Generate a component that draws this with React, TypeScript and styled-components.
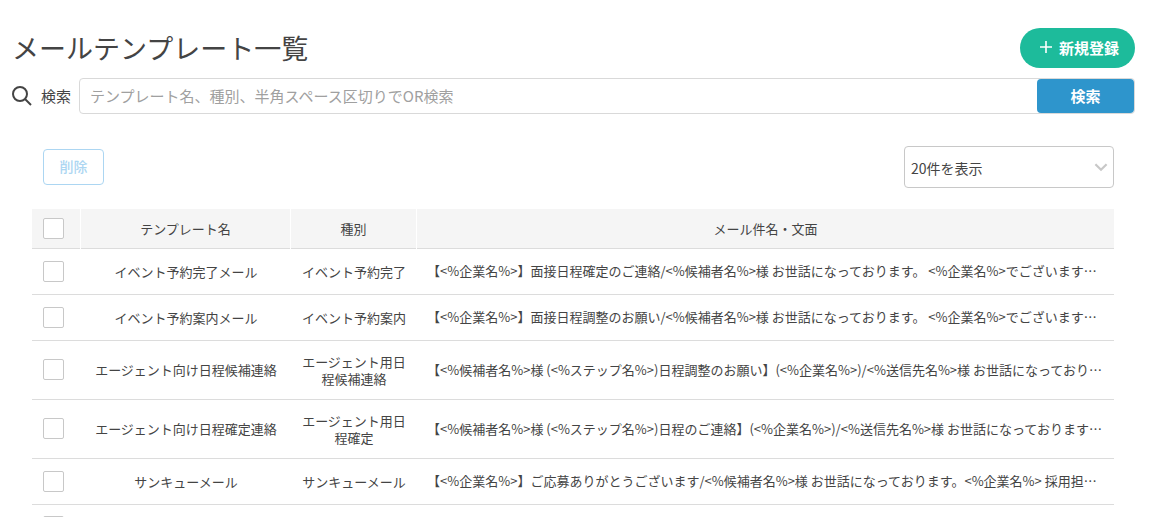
import React from 'react';
import styled, { createGlobalStyle } from 'styled-components';

const GlobalStyle = createGlobalStyle`
  * { box-sizing: border-box; }
  body {
    margin: 0;
    background: #fff;
    color: #444;
    font-family: "Noto Sans CJK JP", "Noto Sans", sans-serif;
    font-size: 13px;
  }
  button, input, select { font-family: inherit; color: inherit; }
`;

const Page = styled.main`
  padding: 28px 18px 0 12px;
`;

const Header = styled.header`
  display: flex;
  align-items: center;
  justify-content: space-between;
`;

const Title = styled.h1`
  margin: 0;
  font-size: 27px;
  line-height: 40px;
  font-weight: 400;
`;

const CreateButton = styled.button`
  display: flex;
  align-items: center;
  gap: 7px;
  height: 40px;
  padding: 0 16px 2px 20px;
  border: 0;
  border-radius: 20px;
  background: #1dbb9b;
  color: #fff;
  font-size: 15px;
  font-weight: 700;
`;

const SearchForm = styled.form`
  display: flex;
  align-items: center;
  gap: 8px;
  margin-top: 10px;
`;

const SearchLabel = styled.label`
  display: flex;
  align-items: center;
  gap: 9px;
  font-size: 15px;
  line-height: 20px;
`;

const SearchBox = styled.div`
  display: flex;
  flex: 1;
  height: 36px;
  border: 1px solid #d9d9d9;
  border-radius: 4px;
`;

const SearchInput = styled.input`
  flex: 1;
  min-width: 0;
  padding: 0 10px 2px;
  border: 0;
  border-radius: 4px;
  outline: 0;
  background: transparent;
  font-size: 15px;
  &::placeholder { color: #a0a0a0; opacity: 1; }
`;

const SearchButton = styled.button`
  width: 97px;
  padding: 0 0 2px;
  border: 0;
  border-radius: 4px;
  background: #2e95cc;
  color: #fff;
  font-size: 15px;
  font-weight: 700;
`;

const Content = styled.section`
  padding: 32px 21px 0 20px;
`;

const Toolbar = styled.div`
  display: flex;
  align-items: center;
  justify-content: space-between;
  padding-left: 11px;
  margin-bottom: 21px;
`;

const DeleteButton = styled.button`
  width: 61px;
  height: 36px;
  padding: 0 0 2px;
  border: 1px solid #acd6f2;
  border-radius: 4px;
  background: #fff;
  font-size: 14px;
  font-weight: 500;
  &:disabled { color: #acd6f2; }
`;

const SelectWrap = styled.div`
  display: grid;
  align-items: center;
  width: 210px;
  svg {
    grid-area: 1 / 1;
    justify-self: end;
    margin-right: 6px;
    pointer-events: none;
  }
`;

const PageSize = styled.select`
  grid-area: 1 / 1;
  height: 42px;
  padding: 2px 28px 0 6px;
  border: 1px solid #c8c8c8;
  border-radius: 4px;
  background: #fff;
  appearance: none;
  font-size: 14px;
`;

const Table = styled.table`
  width: 100%;
  table-layout: fixed;
  border-collapse: separate;
  border-spacing: 0;
  line-height: 17px;
`;

const Col = styled.col<{ $width?: number }>`
  width: ${(p) => (p.$width ? `${p.$width}px` : 'auto')};
`;

const HeadCell = styled.th`
  height: 40px;
  padding: 0 10px 1px;
  border-right: 1px solid #fff;
  background: linear-gradient(#dcdcdc, #dcdcdc) bottom / 100% 1px no-repeat #f5f5f5;
  background-clip: padding-box;
  font-weight: 400;
  &:last-child { border-right: 0; }
`;

const Cell = styled.td`
  padding: 12px 10px;
  border-bottom: 1px solid #dcdcdc;
  text-align: center;
`;

const CheckCell = styled(Cell)`
  padding-top: 11px;
`;

const NameCell = styled(Cell)`
  padding-bottom: 13px;
`;

const PreviewCell = styled(NameCell)`
  text-align: left;
`;

const Preview = styled.div`
  overflow: hidden;
  line-height: 20px;
  white-space: nowrap;
  text-overflow: ellipsis;
`;

const Check = styled.input.attrs({ type: 'checkbox' })`
  display: block;
  width: 21px;
  height: 21px;
  margin: 0 0 0 1px;
  border: 1px solid #c8c8c8;
  border-radius: 2px;
  background: #fff;
  appearance: none;
`;

type Template = { name: string; kind: string; preview: string };

const templates: Template[] = [
  {
    name: 'イベント予約完了メール',
    kind: 'イベント予約完了',
    preview: '【<%企業名%>】面接日程確定のご連絡/<%候補者名%>様 お世話になっております。 <%企業名%>でございます…',
  },
  {
    name: 'イベント予約案内メール',
    kind: 'イベント予約案内',
    preview: '【<%企業名%>】面接日程調整のお願い/<%候補者名%>様 お世話になっております。 <%企業名%>でございます…',
  },
  {
    name: 'エージェント向け日程候補連絡',
    kind: 'エージェント用日程候補連絡',
    preview: '【<%候補者名%>様 (<%ステップ名%>)日程調整のお願い】(<%企業名%>)/<%送信先名%>様 お世話になっており…',
  },
  {
    name: 'エージェント向け日程確定連絡',
    kind: 'エージェント用日程確定',
    preview: '【<%候補者名%>様 (<%ステップ名%>)日程のご連絡】(<%企業名%>)/<%送信先名%>様 お世話になっております…',
  },
  {
    name: 'サンキューメール',
    kind: 'サンキューメール',
    preview: '【<%企業名%>】ご応募ありがとうございます/<%候補者名%>様 お世話になっております。<%企業名%> 採用担…',
  },
  { name: '', kind: '', preview: '' },
];

export default function App() {
  return (
    <Page lang="ja">
      <GlobalStyle />
      <Header>
        <Title>メールテンプレート一覧</Title>
        <CreateButton type="button">
          <svg width="12" height="12" viewBox="0 0 12 12" stroke="#fff" strokeWidth="1.6" aria-hidden="true">
            <path d="M6 0v12M0 6h12" />
          </svg>
          新規登録
        </CreateButton>
      </Header>

      <SearchForm onSubmit={(e) => e.preventDefault()}>
        <SearchLabel htmlFor="keyword">
          <svg width="20" height="20" viewBox="0 0 20 20" fill="none" stroke="#444" strokeWidth="2" aria-hidden="true">
            <circle cx="8" cy="8" r="7" />
            <path d="M13 13l6 6" />
          </svg>
          検索
        </SearchLabel>
        <SearchBox>
          <SearchInput id="keyword" type="text" placeholder="テンプレート名、種別、半角スペース区切りでOR検索" />
          <SearchButton type="submit">検索</SearchButton>
        </SearchBox>
      </SearchForm>

      <Content>
        <Toolbar>
          <DeleteButton type="button" disabled>削除</DeleteButton>
          <SelectWrap>
            <PageSize aria-label="表示件数" defaultValue="20">
              <option value="20">20件を表示</option>
            </PageSize>
            <svg width="14" height="9" viewBox="0 0 14 9" fill="none" stroke="#c8c8c8" strokeWidth="2.2" aria-hidden="true">
              <path d="M1.4 1.2L7 6.8L12.6 1.2" />
            </svg>
          </SelectWrap>
        </Toolbar>

        <Table>
          <colgroup>
            <Col $width={49} />
            <Col $width={210} />
            <Col $width={126} />
            <Col />
          </colgroup>
          <thead>
            <tr>
              <HeadCell><Check aria-label="すべて選択" /></HeadCell>
              <HeadCell>テンプレート名</HeadCell>
              <HeadCell>種別</HeadCell>
              <HeadCell>メール件名・文面</HeadCell>
            </tr>
          </thead>
          <tbody>
            {templates.map((t, i) => (
              <tr key={i}>
                <CheckCell><Check aria-label={t.name || '選択'} /></CheckCell>
                <NameCell>{t.name}</NameCell>
                <Cell>{t.kind}</Cell>
                <PreviewCell><Preview>{t.preview}</Preview></PreviewCell>
              </tr>
            ))}
          </tbody>
        </Table>
      </Content>
    </Page>
  );
}
